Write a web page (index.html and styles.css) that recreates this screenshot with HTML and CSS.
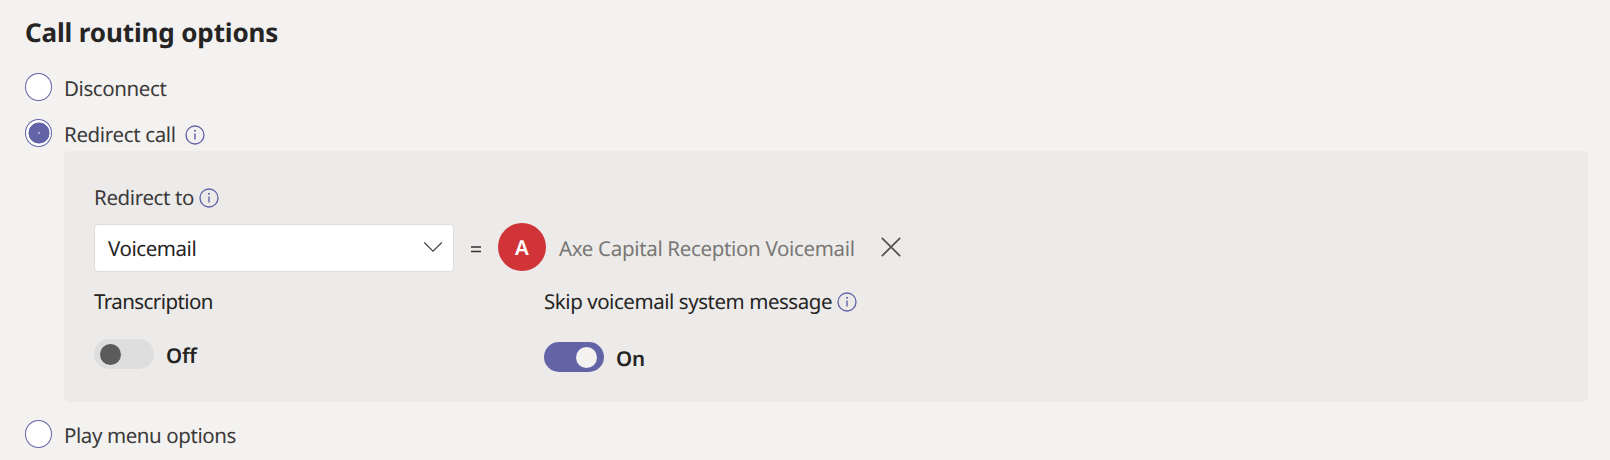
FILE: index.html
```html
<!DOCTYPE html>
<html lang="en">
<head>
<meta charset="utf-8">
<title>Call routing options</title>
<link rel="stylesheet" href="styles.css">
</head>
<body>
<svg class="symbols" aria-hidden="true">
  <symbol id="info" viewBox="0 0 20 20">
    <circle cx="10" cy="10" r="9" fill="none" stroke="#6264a7" stroke-width="1.35"/>
    <path d="M9 5h2v1.5H9z" fill="#6264a7"/>
    <path d="M9 8.6h2v6H9z" fill="#8b8cbd"/>
  </symbol>
</svg>
<main class="routing">
  <h1 class="title"><span class="t-title">Call routing options</span></h1>
  <div class="option first"><span class="radio"></span><span class="label t-disconnect">Disconnect</span></div>
  <div class="option second"><span class="radio checked"></span><span class="label t-redirect">Redirect call</span><svg class="info option-info"><use href="#info"/></svg></div>
  <section class="panel">
    <div class="field-label"><span class="label t-to">Redirect to</span><svg class="info"><use href="#info"/></svg></div>
    <div class="target">
      <div class="select"><span class="t-voicemail">Voicemail</span><svg class="chevron" viewBox="0 0 20 12"><path d="M1.2 1.5 10 10.2l8.8-8.7" fill="none" stroke="#484644" stroke-width="1.2"/></svg></div>
      <svg class="equals" viewBox="0 0 10 7"><path d="M0 1h10M0 5.5h10" stroke="#323130" stroke-width="1.3"/></svg>
      <div class="avatar">A</div>
      <span class="account t-account">Axe Capital Reception Voicemail</span>
      <svg class="close" viewBox="0 0 20 20"><path d="M.8.8l18.4 18.4M19.2.8.8 19.2" fill="none" stroke="#55534f" stroke-width="1.7"/></svg>
    </div>
    <div class="settings">
      <div class="setting">
        <div class="field-label"><span class="t-transcription">Transcription</span></div>
        <div class="switch-row off"><span class="switch"><span class="knob"></span></span><span class="state t-off">Off</span></div>
      </div>
      <div class="setting">
        <div class="field-label"><span class="t-skip">Skip voicemail system message</span><svg class="info"><use href="#info"/></svg></div>
        <div class="switch-row on"><span class="switch"><span class="knob"></span></span><span class="state t-on">On</span></div>
      </div>
    </div>
  </section>
  <div class="option last"><span class="radio"></span><span class="label t-play">Play menu options</span></div>
</main>
</body>
</html>
```
FILE: styles.css
```css
* { box-sizing: border-box; }
body {
  margin: 0;
  height: 460px;
  overflow: hidden;
  background: #f3f2f1;
  color: #252423;
  font: 20.5px/28px "Noto Sans", "Open Sans", sans-serif;
  text-rendering: geometricPrecision;
  white-space: nowrap;
}
.symbols { display: block; width: 0; height: 0; }
.routing { padding: 14px 22px 0 25px; }
.title { margin: 0; height: 36px; font-size: 26px; line-height: 36px; font-weight: 700; }
.option { display: flex; height: 28px; }
.option .label { padding-top: 2px; }
.first { margin-top: 23px; }
.second { margin-top: 18px; }
.last { margin-top: 18px; }
.label { color: #3b3a39; }
.radio {
  flex: none;
  width: 27px;
  height: 28px;
  margin-right: 12px;
  border: 1.4px solid #6264a7;
  border-radius: 50%;
  background: #fff;
}
.checked { background: radial-gradient(circle at 13px 13px, #a9a9d0 0 1px, #6264a7 1.3px 10.2px, #fff 10.8px); }
.info { flex: none; width: 20px; height: 20px; margin: 5px 0 0 5px; }
.option-info { margin: 6px 0 0 9px; }
.panel {
  height: 251px;
  margin: 4px 0 0 39px;
  padding: 32px 30px 0;
  border-radius: 5px;
  background: #ecebe9;
}
.field-label { display: flex; height: 28px; }
.field-label span { padding-top: 1px; }
.target { display: flex; align-items: center; height: 48px; margin-top: 13px; }
.select {
  display: flex;
  align-items: center;
  justify-content: space-between;
  width: 360px;
  height: 48px;
  padding: 0 10px 0 13px;
  border: 1px solid #dfdedd;
  border-radius: 4px;
  background: #fff;
}
.select span { padding-top: 2px; }
.chevron { width: 20px; height: 12px; margin-bottom: 2px; }
.equals { width: 10px; height: 7px; margin: 3px 17px 0; }
.avatar {
  width: 48px;
  height: 48px;
  margin-bottom: 2px;
  border-radius: 50%;
  background: #d13438;
  color: #fff;
  font-weight: 600;
  line-height: 51px;
  text-align: center;
}
.account { margin-left: 13px; padding-top: 2px; color: #797775; }
.close { width: 20px; height: 20px; margin: 0 0 2px 26px; }
.settings { display: flex; margin-top: 15px; }
.setting { width: 450px; }
.switch-row { display: flex; gap: 12px; }
.switch-row.off { margin-top: 24px; }
.switch-row.on { margin-top: 27px; }
.switch { display: flex; width: 60px; height: 30px; padding: 5px 6px; border-radius: 15px; background: #dedede; }
.knob { width: 21px; height: 21px; border-radius: 50%; background: #5b5b5b; }
.on .switch { justify-content: flex-end; padding-right: 7px; background: #6264a7; }
.on .knob { background: #f3f2f1; }
.state { margin-top: 3px; font-weight: 600; }
.t-title { letter-spacing: -0.13px; }
.t-disconnect { letter-spacing: -0.4px; }
.t-redirect { letter-spacing: -0.36px; }
.t-to { letter-spacing: -0.37px; }
.t-voicemail { letter-spacing: -0.44px; }
.t-account { letter-spacing: -0.33px; }
.t-transcription { letter-spacing: -0.57px; }
.t-skip { letter-spacing: -0.45px; }
.t-play { letter-spacing: -0.41px; }
.t-off, .t-on { letter-spacing: -0.2px; }
```
